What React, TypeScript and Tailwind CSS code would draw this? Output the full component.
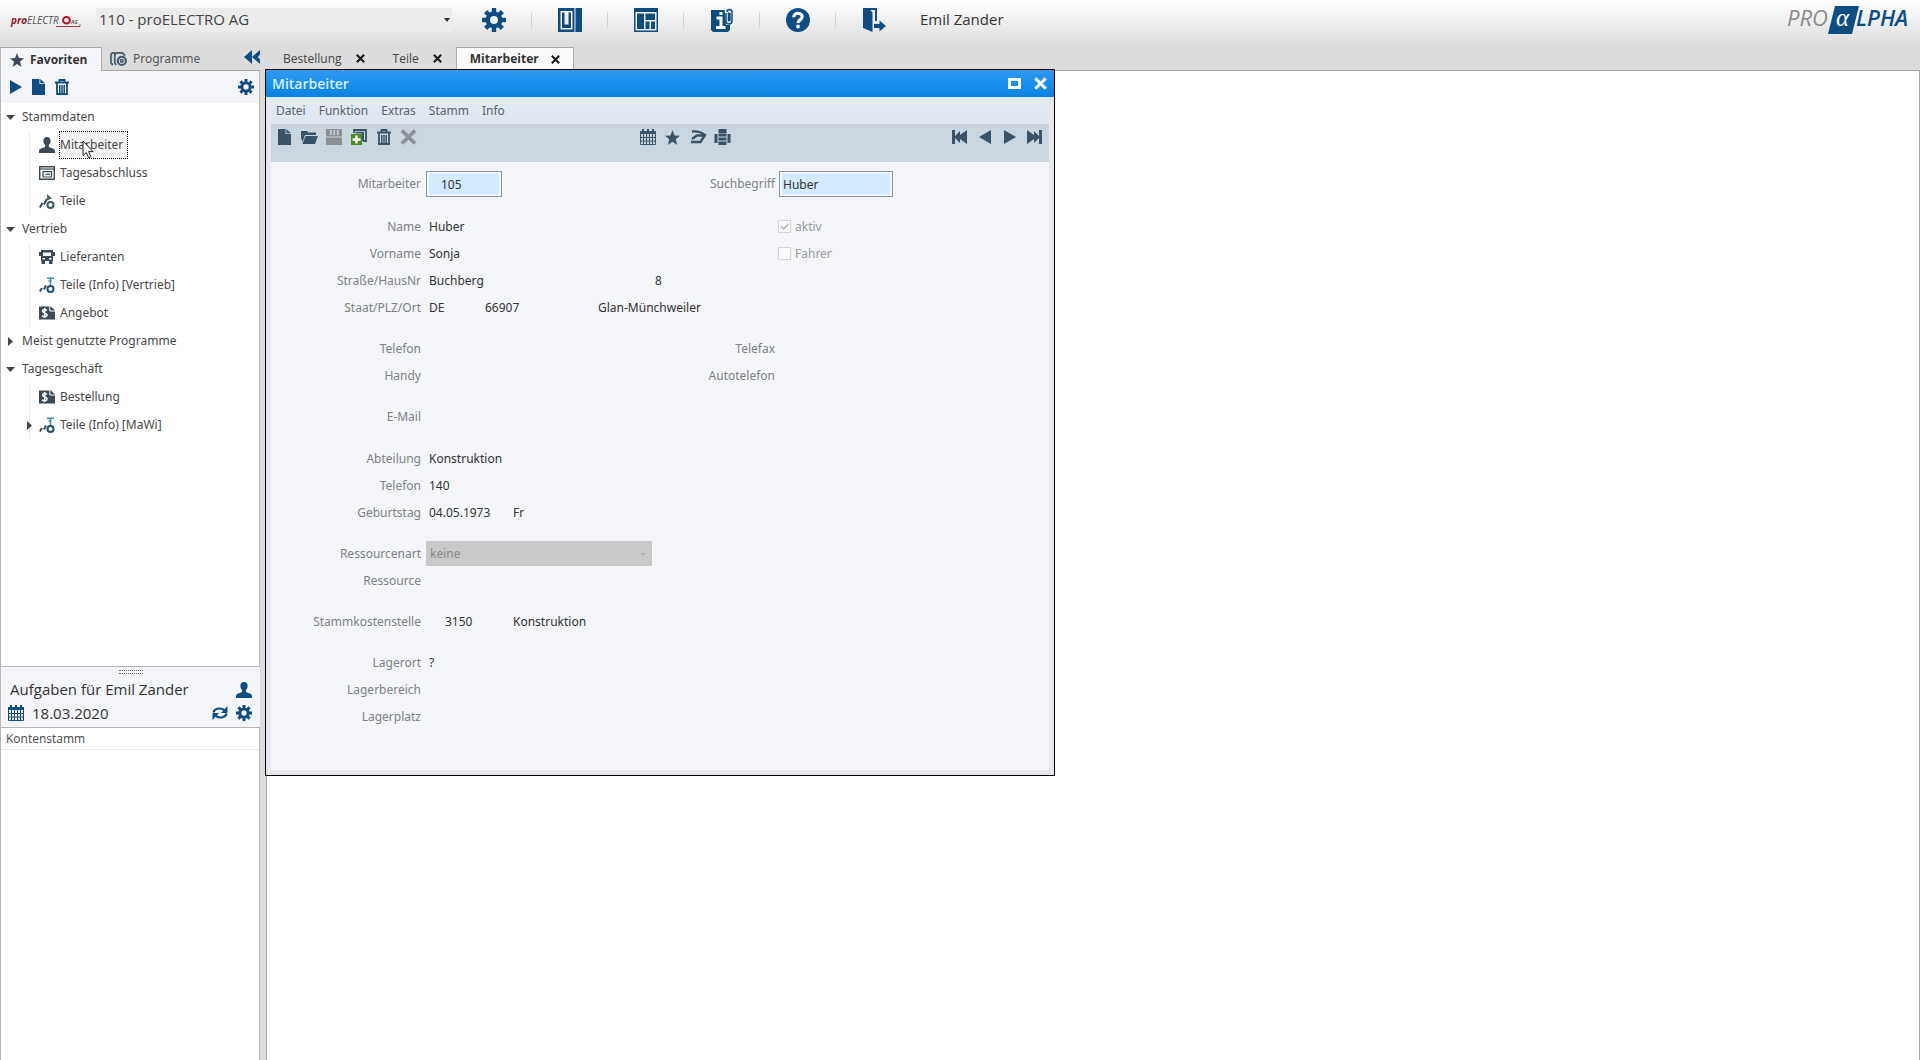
import type { ReactNode } from "react";

type IconProps = { className?: string };

function Gear({ className }: IconProps) {
  return (
    <svg viewBox="0 0 24 24" className={className} fill="none" stroke="currentColor">
      <circle cx="12" cy="12" r="6.2" strokeWidth="4.4" />
      <path
        strokeWidth="4.4"
        d="M12 0v4.6M12 19.4V24M0 12h4.6M19.4 12H24M3.6 3.6l3.2 3.2M17.2 17.2l3.2 3.2M20.4 3.6l-3.2 3.2M6.8 17.2l-3.2 3.2"
      />
    </svg>
  );
}

function SidebarIcon({ className }: IconProps) {
  return (
    <svg viewBox="0 0 24 24" className={className} fill="currentColor">
      <path fillRule="evenodd" d="M0 0h16.500v24H0zM2.500 3v18.500h12V3z" />
      <path d="M4 4.500h2.500v15.500H4zM10.500 4.500H13v15.500h-2.500zM6 16.500h5v3.500H6zM17.500 0H24v24h-6.500z" />
    </svg>
  );
}

function LayoutIcon({ className }: IconProps) {
  return (
    <svg viewBox="0 0 24 24" className={className} fill="currentColor">
      <path fillRule="evenodd" d="M0 0h24v24H0zM1.500 4v18.500h21V4z" />
      <path d="M3 5.500h7v15.500H3zM11.500 5.500H21v6.500h-9.500zM11.500 13.500h4v7.500h-4zM17 13.500h4v7.500h-4z" />
    </svg>
  );
}

function InfoClipIcon({ className }: IconProps) {
  return (
    <svg viewBox="0 0 24 24" className={className} fill="none">
      <path fill="currentColor" d="M1 2h15v14h4v6l-2 2H3l-2-2z" />
      <path stroke="#fff" strokeWidth="3" d="M6.500 10H11v9M6 19.500h9.500M9.500 5.500h3" />
      <path fill="#f4f4f4" d="M14.500 0H24v17h-8z" />
      <path
        stroke="currentColor"
        strokeWidth="1.500"
        d="M16 5v8a3 3 0 0 0 6 0V4a2.500 2.500 0 0 0-5 0M18.500 4.500v8a1 1 0 0 0 1.500 0V5"
      />
    </svg>
  );
}

function HelpIcon({ className }: IconProps) {
  return (
    <svg viewBox="0 0 24 24" className={className} fill="none">
      <circle cx="12" cy="12" r="12" fill="currentColor" />
      <path stroke="#fff" strokeWidth="3.200" d="M7.800 9.200c0-5.400 8.600-5 8.400-.4-.1 2.800-4.200 2.900-4.200 6.200" />
      <circle cx="12" cy="18.500" r="1.900" fill="#fff" />
    </svg>
  );
}

function ExitIcon({ className }: IconProps) {
  return (
    <svg viewBox="0 0 24 24" className={className} fill="currentColor">
      <path d="M1 0h14v13h-2V2H8.500l2 2.500V24L1 20z" />
      <path d="M12 16h5.500v-3.500L24 18l-6.500 5.500V20H12z" />
    </svg>
  );
}

function Star({ className }: IconProps) {
  return (
    <svg viewBox="0 0 24 24" className={className} fill="currentColor">
      <path d="M12 0l3.200 8.700L24 9.200l-6.900 5.700L19.500 24 12 18.700 4.500 24l2.400-9.100L0 9.200l8.800-.5z" />
    </svg>
  );
}

function ProgramsIcon({ className }: IconProps) {
  return (
    <svg viewBox="0 0 18 16" className={className} fill="none" stroke="currentColor">
      <path strokeWidth="1.800" d="M5 1.500H3Q1 1.500 1 4v8l2 2.500M9 1.500H7.500Q5 1.500 5 4v8l1.500 2.500M9 1.500h4l3 3" />
      <circle cx="12.500" cy="10" r="4.300" strokeWidth="2.200" />
      <circle cx="12.500" cy="10" r="1.400" strokeWidth="1.500" />
    </svg>
  );
}

function Rewind({ className }: IconProps) {
  return (
    <svg viewBox="0 0 16 14" className={className} fill="currentColor">
      <path d="M8 0v14L0 7zM16 0v4.500L13.800 7 16 9.500V14L8 7z" />
    </svg>
  );
}

function Page({ className }: IconProps) {
  return (
    <svg viewBox="0 0 16 16" className={className} fill="currentColor">
      <path d="M2 0h7.500v5H15v11H2z" />
      <path d="M10.300 0L15 4.300h-4.700z" />
    </svg>
  );
}

function Trash({ className }: IconProps) {
  return (
    <svg viewBox="0 0 16 16" className={className} fill="none" stroke="currentColor">
      <path strokeWidth="1.800" d="M1 3.500h14M5.500 3V1h5v2M3 4.500V15h10V4.500" />
      <path strokeWidth="1.500" d="M5.800 6v8M8 6v8M10.200 6v8" />
    </svg>
  );
}

function User({ className }: IconProps) {
  return (
    <svg viewBox="0 0 16 16" className={className} fill="currentColor">
      <path d="M8 0c2.500 0 3.800 1.900 3.600 4.300-.1 1.800-.8 3-1.700 3.800v1.800L15 12c.8.500 1 1.500 1 4H0c0-2.500.2-3.500 1-4l5.100-2.100V8.100C5.200 7.300 4.500 6.100 4.400 4.300 4.200 1.900 5.500 0 8 0z" />
    </svg>
  );
}

function Calendar({ className }: IconProps) {
  return (
    <svg viewBox="0 0 16 16" className={className} fill="currentColor">
      <path d="M0 2h2V0h2v2h3V0h2v2h3V0h2v2h2v3H0z" />
      <path
        fill="none"
        stroke="currentColor"
        d="M.5 5v10.500h15V5M0 8.500h16M0 12h16M3.500 5v11M6.500 5v11M9.500 5v11M12.500 5v11"
      />
    </svg>
  );
}

function Refresh({ className }: IconProps) {
  return (
    <svg viewBox="0 0 16 16" className={className} fill="none">
      <path stroke="currentColor" strokeWidth="2.200" d="M1.500 7.500C2 4 8 2 12 5M14.500 8.500C14 12 8 14 4 11" />
      <path fill="currentColor" d="M15.500 1v7H9zM.5 15V8H7z" />
    </svg>
  );
}

function ClosingIcon({ className }: IconProps) {
  return (
    <svg viewBox="0 0 16 14" className={className} fill="none" stroke="currentColor">
      <path strokeWidth="1.400" d="M.7.700h14.600v12.600H.7z" />
      <path d="M1 3h14" strokeWidth="1.200" />
      <path strokeWidth="1.200" d="M4 5.600h8.500v5.400H4z" />
      <path d="M6.500 8.300H11" strokeWidth="1.200" />
    </svg>
  );
}

function PartsIcon({ className }: IconProps) {
  return (
    <svg viewBox="0 0 16 16" className={className} fill="none" stroke="currentColor">
      <path strokeWidth="2" d="M.8 14.500L3.500 10M5 11.500L7.800 6" />
      <path fill="#3f6b60" stroke="none" d="M8 1l5 4.500-5 2z" />
      <circle cx="11.500" cy="12" r="3" stroke="#2f5f55" strokeWidth="2" />
    </svg>
  );
}

function PartsInfoIcon({ className }: IconProps) {
  return (
    <svg viewBox="0 0 16 16" className={className} fill="none" stroke="currentColor">
      <path strokeWidth="2" d="M.8 14.500L3 11M5 12.500L7 8.500" />
      <path stroke="#3f88bd" strokeWidth="1.500" d="M8 1.200h7M9.500 4h3M11.500 1v7" />
      <circle cx="11.500" cy="12" r="3" stroke="#1c4d73" strokeWidth="2" />
    </svg>
  );
}

function Bus({ className }: IconProps) {
  return (
    <svg viewBox="0 0 16 14" className={className} fill="currentColor">
      <path
        fillRule="evenodd"
        d="M2 0h12v2h2v4h-2v5h-.5v3H10v-3H6v3H2.500v-3H2V6H0V2h2zM4 2.500V6h8V2.500zM3.500 8v1.500H6V8zM10 8v1.500h2.500V8z"
      />
    </svg>
  );
}

function MoneyDoc({ className }: IconProps) {
  return (
    <svg viewBox="0 0 16 13" className={className} fill="none">
      <path fill="currentColor" d="M0 0h12l4 4v9H0z" />
      <path stroke="#fff" strokeWidth="1.600" d="M7.800 4C6.300 2.300 3.400 2.800 3.600 4.700c.2 2.100 4.400 1.400 4.400 3.700 0 2.200-3.400 2.300-5 .9M5.700 1.500v10" />
      <path stroke="#fff" strokeWidth="1" d="M10.800 0v4.500H16" />
    </svg>
  );
}

function FolderOpen({ className }: IconProps) {
  return (
    <svg viewBox="0 0 18 16" className={className} fill="currentColor">
      <path d="M1 2h6l1.500 1.500H16V6H5l-2.500 7L1 9z" />
      <path d="M5.500 7H18l-3 8H2.500z" />
    </svg>
  );
}

function Save({ className }: IconProps) {
  return (
    <svg viewBox="0 0 16 16" className={className} fill="currentColor">
      <path fillRule="evenodd" d="M0 0h16v16H0zM4 1v5h1.500V1zM7.500 1v5H9V1zM11 1v5h1.500V1zM0 7.500v1h16v-1z" />
    </svg>
  );
}

function CopyAdd({ className }: IconProps) {
  return (
    <svg viewBox="0 0 16 16" className={className} fill="none">
      <path stroke="currentColor" strokeWidth="1.800" d="M3 4V1h12v11h-3" />
      <path fill="currentColor" d="M4.500 2.800H13V12h-2V4.500H4.500z" />
      <path fill="#4c8a22" d="M0 5h11v11H0z" />
      <path stroke="#fff" strokeWidth="2.400" d="M5.500 6.500v8M1.500 10.500h8" />
    </svg>
  );
}

function Cross({ className }: IconProps) {
  return (
    <svg viewBox="0 0 16 16" className={className} fill="none" stroke="currentColor">
      <path strokeWidth="3.800" d="M1.500 1.500l13 13M14.500 1.500l-13 13" />
    </svg>
  );
}

function Forward({ className }: IconProps) {
  return (
    <svg viewBox="0 0 18 16" className={className} fill="none" stroke="currentColor">
      <path strokeWidth="2.400" d="M3 2.500c5-.5 9 .3 13 3.500l-4.500 7H2M3 10l5-3.500h8" />
    </svg>
  );
}

function Printer({ className }: IconProps) {
  return (
    <svg viewBox="0 0 16 16" className={className} fill="currentColor">
      <path d="M4 0h8v4H4zM0 5h3v9H0zM13 5h3v9h-3zM4 4.500h8v3H4zM4 8.500h8v3H4zM4 12.500h8V16H4z" />
    </svg>
  );
}

function Arrow({ className }: IconProps) {
  return (
    <svg viewBox="0 0 12 14" preserveAspectRatio="none" className={className} fill="currentColor">
      <path d="M0 0l12 7-12 7z" />
    </svg>
  );
}

function ArrowEnd({ className }: IconProps) {
  return (
    <svg viewBox="0 0 15 14" className={className} fill="currentColor">
      <path d="M0 0l7 5V1l5 5V0h3v14h-3V8l-5 5V9l-7 5z" />
    </svg>
  );
}

function Pointer({ className }: IconProps) {
  return (
    <svg viewBox="0 0 12 19" className={className}>
      <path fill="#fff" stroke="#222" d="M1 1v14.500l3.300-3 2.300 5.300 2.300-1-2.300-5.200H11z" />
    </svg>
  );
}

function CompanyLogo() {
  return (
    <svg viewBox="0 0 72 16" className="h-4 w-18" role="img" aria-label="proELECTRO AG">
      <g fontFamily="Open Sans, sans-serif" fontSize="10" fontStyle="italic">
        <text x="1" y="12" fontWeight="700" fill="#8c1d2b">
          pro<tspan fill="#555" fontWeight="400">ELECTR</tspan>
        </text>
        <text x="61" y="12" fontSize="5" fontWeight="700" fill="#555">AG</text>
      </g>
      <ellipse cx="56.500" cy="8.200" rx="3.400" ry="3.200" fill="none" stroke="#b3122a" strokeWidth="2" />
      <path stroke="#9b3a45" d="M46 14.500h24v-2" fill="none" />
    </svg>
  );
}

function ProductLogo() {
  return (
    <svg viewBox="0 0 132 32" className="h-8 w-[132px] overflow-visible" role="img" aria-label="proALPHA">
      <path fill="#0f4c81" d="M51 2h24l-7 28H44z" />
      <g fontFamily="Open Sans, sans-serif" fontSize="22" fontStyle="italic">
        <text x="3" y="22" fill="#8b8b8d">PRO</text>
        <text x="72" y="22" fill="#0f4c81" fontWeight="600">LPHA</text>
        <text x="52" y="22" fill="#fff" fontSize="25" fontFamily="Liberation Serif, serif">α</text>
      </g>
    </svg>
  );
}

const headerActions = [
  { label: "Einstellungen", Icon: Gear },
  { label: "Seitenleiste", Icon: SidebarIcon },
  { label: "Layout", Icon: LayoutIcon },
  { label: "Informationen", Icon: InfoClipIcon },
  { label: "Hilfe", Icon: HelpIcon },
  { label: "Abmelden", Icon: ExitIcon },
];

function Header() {
  return (
    <header className="flex h-[39px] items-center pl-[10px] pr-1">
      <CompanyLogo />
      <select
        aria-label="Firma"
        className="ml-[14px] h-6 w-[356px] appearance-none bg-[#ececec] pl-[3px] text-[15px] text-[#444]"
      >
        <option>110 - proELECTRO AG</option>
      </select>
      <span className="-ml-2 h-0 w-0 border-x-3 border-t-4 border-x-transparent border-t-[#333]" />
      <nav className="ml-[6px] flex items-center divide-x divide-[#d4d4d4]">
        {headerActions.map(({ label, Icon }) => (
          <button key={label} aria-label={label} className="flex h-4 w-[76px] items-center justify-center text-[#0f4c81]">
            <Icon className="h-6 w-6 shrink-0" />
          </button>
        ))}
      </nav>
      <span className="ml-2 text-[15px] text-[#333]">Emil Zander</span>
      <div className="ml-auto">
        <ProductLogo />
      </div>
    </header>
  );
}

function DocTab({ label, active }: { label: string; active?: boolean }) {
  return (
    <div
      className={
        active
          ? "flex items-center gap-3 border-x border-t border-[#aaa] bg-[#fbfbfc] px-[13px] font-bold text-[#333]"
          : "flex items-center gap-[14px] px-[14px] text-[#444]"
      }
    >
      <button>{label}</button>
      <button aria-label={`${label} schließen`} className="text-[#1c1c1c]">
        <Cross className="h-[9px] w-[9px]" />
      </button>
    </div>
  );
}

type TreeNode = {
  label: string;
  Icon?: (props: IconProps) => ReactNode;
  open?: boolean;
  closed?: boolean;
  selected?: boolean;
  children?: TreeNode[];
};

const tree: TreeNode[] = [
  {
    label: "Stammdaten",
    open: true,
    children: [
      { label: "Mitarbeiter", Icon: User, selected: true },
      { label: "Tagesabschluss", Icon: ClosingIcon },
      { label: "Teile", Icon: PartsIcon },
    ],
  },
  {
    label: "Vertrieb",
    open: true,
    children: [
      { label: "Lieferanten", Icon: Bus },
      { label: "Teile (Info) [Vertrieb]", Icon: PartsInfoIcon },
      { label: "Angebot", Icon: MoneyDoc },
    ],
  },
  { label: "Meist genutzte Programme", closed: true },
  {
    label: "Tagesgeschäft",
    open: true,
    children: [
      { label: "Bestellung", Icon: MoneyDoc },
      { label: "Teile (Info) [MaWi]", Icon: PartsInfoIcon, closed: true },
    ],
  },
];

function Twisty({ open, closed }: { open?: boolean; closed?: boolean }) {
  return (
    <span className="flex w-[10px] shrink-0 justify-center text-[#444]">
      {open && <Arrow className="h-[9px] w-[5px] rotate-90" />}
      {closed && <Arrow className="h-[9px] w-[5px]" />}
    </span>
  );
}

function FavoritesTree() {
  return (
    <ul className="font-['Noto_Sans','Open_Sans',sans-serif] text-[12px] text-[#484848]">
      {tree.map((group) => (
        <li key={group.label}>
          <button className="flex h-7 items-center gap-[7px] pl-1">
            <Twisty open={group.open} closed={group.closed} />
            {group.label}
          </button>
          {group.children && (
            <ul className="ml-[28px] border-l border-[#ececec]">
              {group.children.map(({ label, Icon, closed, selected }) => (
                <li key={label} className="relative -ml-[6px] flex h-7 items-center">
                  <Twisty closed={closed} />
                  <button className="flex items-center gap-1 pl-[5px]">
                    {Icon && <Icon className="h-4 w-4 text-[#3d4a55]" />}
                    <span
                      className={
                        selected
                          ? "-my-px border border-dotted border-black bg-[#f4f4f4] py-1 pr-1"
                          : "border border-transparent"
                      }
                    >
                      {label}
                    </span>
                  </button>
                  {selected && <Pointer className="absolute left-[58px] top-[9px] h-[19px] w-3" />}
                </li>
              ))}
            </ul>
          )}
        </li>
      ))}
    </ul>
  );
}

function Sidebar() {
  return (
    <aside className="flex w-[260px] shrink-0 flex-col border-l border-[#b5b5b5]">
      <div className="flex h-6 shrink-0 text-[12px]">
        <button className="flex w-[101px] items-center gap-[6px] border-r border-t border-[#aaa] bg-[#f4f5f8] pl-[9px] font-bold text-[#333]">
          <Star className="h-[14px] w-[14px] text-[#3d4a55]" />
          Favoriten
        </button>
        <button className="flex flex-1 items-center gap-[6px] border-b border-[#aaa] pl-2 font-['Noto_Sans','Open_Sans',sans-serif] text-[#555]">
          <ProgramsIcon className="h-4 w-[17px] text-[#47596a]" />
          Programme
        </button>
        <button aria-label="Einklappen" className="border-b border-[#aaa] pb-1 text-[#0f4c81]">
          <Rewind className="h-[14px] w-4" />
        </button>
      </div>
      <div className="flex h-[32px] shrink-0 items-center gap-2 border-r border-[#b5b5b5] bg-[#f4f5f8] pl-[9px] pr-[5px] text-[#0f4c81]">
        <button aria-label="Starten">
          <Arrow className="h-[14px] w-[12px]" />
        </button>
        <button aria-label="Neu">
          <Page className="h-4 w-4" />
        </button>
        <button aria-label="Löschen">
          <Trash className="h-4 w-4" />
        </button>
        <button aria-label="Optionen" className="ml-auto">
          <Gear className="h-4 w-4" />
        </button>
      </div>
      <div className="h-[563px] shrink-0 border-r border-[#b5b5b5] bg-white">
        <FavoritesTree />
      </div>
      <div className="shrink-0 border-b border-t border-[#b5b5b5] bg-[#f4f5f8] text-[#333]">
        <div className="flex h-[9px] items-center justify-center">
          <span className="h-1 w-6 border-y border-dotted border-[#666]" />
        </div>
        <div className="flex h-[27px] items-center justify-between pl-[9px] pr-[8px]">
          <h2 className="text-[15px]">Aufgaben für Emil Zander</h2>
          <User className="h-4 w-4 text-[#0f4c81]" />
        </div>
        <div className="flex h-[24px] items-center gap-2 pb-1 pl-[7px] pr-[8px] text-[15px]">
          <Calendar className="h-4 w-4 text-[#0f4c81]" />
          18.03.2020
          <button aria-label="Aktualisieren" className="ml-auto text-[#0f4c81]">
            <Refresh className="h-4 w-4" />
          </button>
          <button aria-label="Aufgabenoptionen" className="text-[#0f4c81]">
            <Gear className="h-4 w-4" />
          </button>
        </div>
      </div>
      <div className="flex-1 border-r border-[#b5b5b5] bg-white">
        <div className="flex h-[22px] items-center border-b border-[#e6e6e6] pl-[5px] text-[12px] text-[#484848]">
          Kontenstamm
        </div>
      </div>
    </aside>
  );
}

const labelClass = "mr-[5px] w-[150px] shrink-0 text-right text-[#808285]";
const rightLabelClass = "mr-1 w-[98px] shrink-0 text-right text-[#808285]";
const plainInput = "min-w-0 bg-transparent px-[3px] text-[#333] outline-none";
const boxedInput = "h-[26px] border border-[#8f959b] bg-[#d4eaff] text-[#333] shadow-[inset_0_0_0_2px_#eef5fc]";

type Cell = { value: string; width: string };

function Row({ id, label, cells, children }: { id: string; label: string; cells?: Cell[]; children?: ReactNode }) {
  return (
    <div className="flex h-[27px] items-center">
      <label htmlFor={id} className={labelClass}>
        {label}
      </label>
      {cells?.map((cell, i) => (
        <input
          key={i}
          id={i === 0 ? id : undefined}
          aria-label={i === 0 ? undefined : `${label} ${i + 1}`}
          readOnly
          defaultValue={cell.value}
          className={`${plainInput} ${cell.width}`}
        />
      ))}
      {children}
    </div>
  );
}

function CheckRow({ id, label, checked }: { id: string; label: string; checked?: boolean }) {
  return (
    <div className="ml-[102px] flex items-center gap-1 text-[#9a9c9f]">
      <span className="relative flex h-[13px] w-[13px]">
        <input
          id={id}
          type="checkbox"
          disabled
          defaultChecked={checked}
          className="h-[13px] w-[13px] appearance-none border border-[#d5d5d5] bg-[#fafafa]"
        />
        {checked && (
          <svg viewBox="0 0 13 13" className="absolute inset-0" fill="none" stroke="#b0b0b0" strokeWidth="1.500">
            <path d="M3 6.500l2.500 2.500L10.500 4" />
          </svg>
        )}
      </span>
      <label htmlFor={id}>{label}</label>
    </div>
  );
}

function RightField({ id, label }: { id: string; label: string }) {
  return (
    <>
      <label htmlFor={id} className={rightLabelClass}>
        {label}
      </label>
      <input id={id} readOnly className={`${plainInput} w-[114px]`} />
    </>
  );
}

function EmployeeForm() {
  return (
    <form className="bg-[#f3f5f8] pb-10 pt-[6px] font-['Noto_Sans','Open_Sans',sans-serif] text-[12px]">
      <div className="flex h-[32px] items-center">
        <label htmlFor="mitarbeiter" className={labelClass}>
          Mitarbeiter
        </label>
        <input id="mitarbeiter" defaultValue="105" className={`${boxedInput} mr-[175px] w-[76px] pl-[14px]`} />
        <label htmlFor="suchbegriff" className={rightLabelClass}>
          Suchbegriff
        </label>
        <input id="suchbegriff" defaultValue="Huber" className={`${boxedInput} w-[114px] pl-[3px]`} />
      </div>

      <div className="mt-[13px] flex flex-col gap-[14px]">
        <div>
          <Row id="name" label="Name" cells={[{ value: "Huber", width: "w-[250px]" }]}>
            <CheckRow id="aktiv" label="aktiv" checked />
          </Row>
          <Row id="vorname" label="Vorname" cells={[{ value: "Sonja", width: "w-[250px]" }]}>
            <CheckRow id="fahrer" label="Fahrer" />
          </Row>
          <Row
            id="strasse"
            label="Straße/HausNr"
            cells={[
              { value: "Buchberg", width: "w-[226px]" },
              { value: "8", width: "w-[40px]" },
            ]}
          />
          <Row
            id="ort"
            label="Staat/PLZ/Ort"
            cells={[
              { value: "DE", width: "w-[56px]" },
              { value: "66907", width: "w-[113px]" },
              { value: "Glan-Münchweiler", width: "w-[200px]" },
            ]}
          />
        </div>
        <div>
          <Row id="telefon" label="Telefon" cells={[{ value: "", width: "w-[251px]" }]}>
            <RightField id="telefax" label="Telefax" />
          </Row>
          <Row id="handy" label="Handy" cells={[{ value: "", width: "w-[251px]" }]}>
            <RightField id="autotelefon" label="Autotelefon" />
          </Row>
        </div>
        <Row id="email" label="E-Mail" cells={[{ value: "", width: "w-[250px]" }]} />
      </div>

      <div className="mt-[15px] flex flex-col gap-[14px]">
        <div>
          <Row id="abteilung" label="Abteilung" cells={[{ value: "Konstruktion", width: "w-[226px]" }]} />
          <Row id="durchwahl" label="Telefon" cells={[{ value: "140", width: "w-[226px]" }]} />
          <Row
            id="geburtstag"
            label="Geburtstag"
            cells={[
              { value: "04.05.1973", width: "w-[84px]" },
              { value: "Fr", width: "w-[40px]" },
            ]}
          />
        </div>
        <div>
          <Row id="ressourcenart" label="Ressourcenart">
            <div className="relative">
              <select
                id="ressourcenart"
                disabled
                className="block h-[25px] w-[226px] appearance-none bg-[#c9c9c9] px-1 text-[#8a8a8a] opacity-100"
              >
                <option>keine</option>
              </select>
              <span className="absolute right-[6px] top-3 border-x-3 border-t-3 border-x-transparent border-t-[#b0b0b0]" />
            </div>
          </Row>
          <Row id="ressource" label="Ressource" cells={[{ value: "", width: "w-[226px]" }]} />
        </div>
        <div className="flex h-[27px] items-center">
          <label htmlFor="kostenstelle" className={labelClass}>
            Stammkostenstelle
          </label>
          <input id="kostenstelle" readOnly defaultValue="3150" className="w-[84px] pl-[19px] text-[#333] outline-none" />
          <input
            aria-label="Bezeichnung Kostenstelle"
            readOnly
            defaultValue="Konstruktion"
            className={`${plainInput} w-[200px]`}
          />
        </div>
        <div>
          <Row id="lagerort" label="Lagerort" cells={[{ value: "?", width: "w-[226px]" }]} />
          <Row id="lagerbereich" label="Lagerbereich" cells={[{ value: "", width: "w-[226px]" }]} />
          <Row id="lagerplatz" label="Lagerplatz" cells={[{ value: "", width: "w-[226px]" }]} />
        </div>
      </div>
    </form>
  );
}

function ToolButton({ label, children, disabled }: { label: string; children: ReactNode; disabled?: boolean }) {
  return (
    <button
      aria-label={label}
      disabled={disabled}
      className="flex w-[25px] items-center justify-center text-[#3b5366] disabled:text-[#8c9196]"
    >
      {children}
    </button>
  );
}

function EmployeeWindow() {
  return (
    <section className="absolute -left-0.5 -top-0.5 w-[790px] border border-black bg-[#e6e8ee]">
      <div className="flex h-[27px] items-center gap-[13px] bg-linear-to-b from-[#2f98ef] via-[#1690f0] to-[#0c82de] pl-[6px] pr-[7px]">
        <h1 className="mr-auto text-[14px] font-semibold text-[#d9efff]">Mitarbeiter</h1>
        <button aria-label="Maximieren" className="h-[11px] w-[13px] border-3 border-white" />
        <button aria-label="Schließen" className="text-white">
          <Cross className="h-[13px] w-[13px]" />
        </button>
      </div>
      <div className="px-[5px] pb-[5px]">
        <nav className="flex h-[27px] items-center gap-[13px] bg-linear-to-b from-[#e3ebf5] to-[#dfe6ee] pl-[5px] font-['Noto_Sans','Open_Sans',sans-serif] text-[12px] text-[#5a636c]">
          {["Datei", "Funktion", "Extras", "Stamm", "Info"].map((item) => (
            <button key={item}>{item}</button>
          ))}
        </nav>
        <div className="flex h-[38px] border-t-3 border-[#ccd2d9] bg-[#c9d5df] pb-[15px]">
          <div className="flex flex-1">
            <ToolButton label="Neu">
              <Page className="h-4 w-4" />
            </ToolButton>
            <ToolButton label="Öffnen">
              <FolderOpen className="h-4 w-[18px]" />
            </ToolButton>
            <ToolButton label="Speichern" disabled>
              <Save className="h-4 w-4" />
            </ToolButton>
            <ToolButton label="Kopieren">
              <CopyAdd className="h-4 w-4" />
            </ToolButton>
            <ToolButton label="Löschen">
              <Trash className="h-4 w-4" />
            </ToolButton>
            <ToolButton label="Abbrechen" disabled>
              <Cross className="h-4 w-[17px]" />
            </ToolButton>
          </div>
          <div className="flex">
            <ToolButton label="Kalender">
              <Calendar className="h-4 w-4" />
            </ToolButton>
            <ToolButton label="Favorit">
              <Star className="h-[15px] w-[15px]" />
            </ToolButton>
            <ToolButton label="Weiterleiten">
              <Forward className="h-4 w-[18px]" />
            </ToolButton>
            <ToolButton label="Drucken">
              <Printer className="h-4 w-[17px]" />
            </ToolButton>
          </div>
          <div className="flex w-[314px] justify-end pr-0.5">
            <ToolButton label="Erster">
              <ArrowEnd className="h-[14px] w-[15px] rotate-180" />
            </ToolButton>
            <ToolButton label="Vorheriger">
              <Arrow className="h-[14px] w-3 rotate-180" />
            </ToolButton>
            <ToolButton label="Nächster">
              <Arrow className="h-[14px] w-3" />
            </ToolButton>
            <ToolButton label="Letzter">
              <ArrowEnd className="h-[14px] w-[15px]" />
            </ToolButton>
          </div>
        </div>
        <EmployeeForm />
      </div>
    </section>
  );
}

export default function App() {
  return (
    <div className="flex min-h-screen flex-col bg-[#e1e1e3] bg-linear-to-b from-white to-[#dcdcdc] to-[47px] font-['Open_Sans','Noto_Sans',sans-serif]">
      <Header />
      <div className="mt-2 flex flex-1">
        <Sidebar />
        <main className="ml-[6px] flex flex-1 flex-col">
          <div className="flex h-[23px] pl-[3px] text-[12px]">
            <DocTab label="Bestellung" />
            <DocTab label="Teile" />
            <DocTab label="Mitarbeiter" active />
          </div>
          <div className="relative flex-1 border-x border-t border-[#a8a8a8] bg-white">
            <EmployeeWindow />
          </div>
        </main>
      </div>
    </div>
  );
}
